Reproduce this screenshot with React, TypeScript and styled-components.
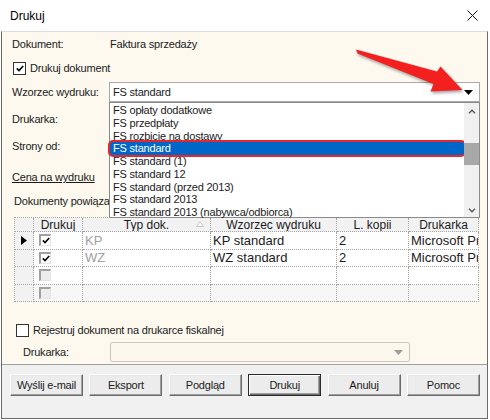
import React from "react";
import styled, { createGlobalStyle } from "styled-components";

const GlobalStyle = createGlobalStyle`
  html, body {
    margin: 0;
    padding: 0;
    background: #ffffff;
  }
  body {
    font-family: "Liberation Sans", Arial, sans-serif;
    color: #1b1b1b;
  }
`;

const Window = styled.div`
  position: relative;
  width: 490px;
  height: 420px;
  display: flex;
  flex-direction: column;
  background: #ffffff;
  overflow: hidden;
`;

const TitleBar = styled.div`
  flex: none;
  height: 31px;
  display: flex;
  align-items: center;
  justify-content: space-between;
  padding: 0 12px 0 10px;
  font-size: 12px;
  color: #000;
`;

const Frame = styled.div`
  flex: 1;
  display: flex;
  flex-direction: column;
  margin: 0 2px 1px 1px;
  border: 1px solid #6b6b6b;
  border-top-color: #dcdcdc;
`;

const Body = styled.div`
  flex: 1;
  display: flex;
  flex-direction: column;
  padding: 4px 7px 0 10px;
  background: #fdf9ef;
  font-size: 11px;
  letter-spacing: -0.2px;
`;

const Row = styled.div<{ $h: number; $mt?: number; $indent?: number }>`
  display: flex;
  align-items: center;
  height: ${(p) => p.$h}px;
  margin-top: ${(p) => p.$mt ?? 0}px;
  padding-left: ${(p) => p.$indent ?? 0}px;
`;

const Label = styled.span<{ $w?: number }>`
  flex: none;
  width: ${(p) => (p.$w ? `${p.$w}px` : "auto")};
  white-space: nowrap;
`;

const LinkLabel = styled.span`
  text-decoration: underline;
`;

const Check = styled.span<{ $checked?: boolean }>`
  flex: none;
  width: 11px;
  height: 11px;
  border: 1px solid #333;
  background: #fff;
  margin-right: 4px;
  display: flex;
  align-items: center;
  justify-content: center;
`;

const SelectWrap = styled.div<{ $w?: number; $disabled?: boolean }>`
  position: relative;
  flex: ${(p) => (p.$w ? "none" : "1")};
  width: ${(p) => (p.$w ? `${p.$w}px` : "auto")};
  height: 100%;
  box-sizing: border-box;
  border: 1px solid ${(p) => (p.$disabled ? "#c9c6bd" : "#a9a9a9")};
  border-radius: ${(p) => (p.$disabled ? "2px" : "0")};
  background: ${(p) => (p.$disabled ? "#fcf8ee" : "#fff")};
  display: flex;
  align-items: center;
  padding: 0 6px 0 3px;
  font-size: 11px;
`;

const SelectText = styled.span`
  flex: 1;
`;

const DropList = styled.div`
  position: absolute;
  top: calc(100% + 1px);
  left: -1px;
  right: -1px;
  height: 116px;
  box-sizing: border-box;
  border: 1px solid #8a8a8a;
  background: #fff;
  padding: 1px 15px 0 0;
  z-index: 5;
`;

const DropItem = styled.div<{ $selected?: boolean }>`
  height: 12.75px;
  line-height: 12.75px;
  padding-left: 3px;
  white-space: nowrap;
  color: ${(p) => (p.$selected ? "#fff" : "#1b1b1b")};
  background: ${(p) => (p.$selected ? "#0067c8" : "transparent")};
  border-radius: ${(p) => (p.$selected ? "3px" : "0")};
  box-shadow: ${(p) => (p.$selected ? "0 0 0 2px #e8272b" : "none")};
  position: relative;
`;

const ScrollBar = styled.div`
  position: absolute;
  top: 0;
  right: 0;
  bottom: 0;
  width: 15px;
  background: #f0f0f0;
  display: flex;
  flex-direction: column;
  align-items: center;
  justify-content: space-between;
  padding: 6px 0 4px;
  box-sizing: border-box;
`;

const Thumb = styled.div`
  position: absolute;
  top: 40px;
  left: 0;
  width: 15px;
  height: 22px;
  background: #a8a8a8;
`;

const Grid = styled.div`
  display: grid;
  grid-template-columns: 19px 49px 128px 126px 72px 70px;
  grid-template-rows: 14px repeat(4, 17.5px);
  width: 464px;
  margin: 9px 0 0 2px;
  border-top: 1px dotted #a6a6a6;
  border-left: 1px dotted #a6a6a6;
  box-sizing: border-box;
  font-size: 13px;
  letter-spacing: 0;
`;

const Cell = styled.div<{ $kind?: "head" | "ind" | "cell"; $muted?: boolean; $alt?: boolean; $center?: boolean }>`
  position: relative;
  display: flex;
  align-items: center;
  justify-content: ${(p) => (p.$center ? "center" : "flex-start")};
  padding-left: ${(p) => (p.$center ? 0 : 2)}px;
  overflow: hidden;
  white-space: nowrap;
  border-right: 1px dotted #a6a6a6;
  border-bottom: 1px dotted #a6a6a6;
  font-size: ${(p) => (p.$kind === "head" ? "12px" : "13px")};
  color: ${(p) => (p.$muted ? "#a0a0a0" : "#1b1b1b")};
  background: ${(p) =>
    p.$kind === "head" || p.$kind === "ind" ? "#f2f2f2" : p.$alt ? "#f7f7f7" : "#fff"};
`;

const GridCheck = styled.span<{ $checked?: boolean }>`
  margin-left: 3px;
  width: 9px;
  height: 9px;
  border-top: 2px solid #a0a0a0;
  border-left: 2px solid #a0a0a0;
  border-right: 1px solid #e4e4e4;
  border-bottom: 1px solid #e4e4e4;
  background: ${(p) => (p.$checked ? "#fff" : "#ededed")};
  display: flex;
  align-items: center;
  justify-content: center;
`;

const SortMark = styled.svg`
  position: absolute;
  right: 6px;
  top: 3px;
`;

const ButtonBar = styled.div`
  flex: none;
  height: 44px;
  border-top: 1px solid #a0a0a0;
  background: #f0f0f0;
  display: flex;
  justify-content: space-between;
  align-items: flex-start;
  padding: 9px 7px 0 8px;
`;

const Button = styled.button<{ $default?: boolean }>`
  width: 73px;
  height: 22px;
  font-family: "Liberation Sans", Arial, sans-serif;
  font-size: 11px;
  letter-spacing: -0.2px;
  color: #1b1b1b;
  background: #ececec;
  border: 1px solid;
  border-color: ${(p) => (p.$default ? "#2b2b2b" : "#fdfdfd #6a6a6a #6a6a6a #fdfdfd")};
  box-shadow: ${(p) =>
    p.$default
      ? "inset 1px 1px #fdfdfd, inset -1px -1px #6a6a6a, inset -2px -2px #a0a0a0"
      : "inset -1px -1px #a0a0a0, inset 1px 1px #e6e6e6"};
  padding: 0;
`;

const Arrow = styled.svg`
  position: absolute;
  left: 0;
  top: 0;
  pointer-events: none;
  filter: drop-shadow(1px 2px 1.5px rgba(0, 0, 0, 0.35));
  z-index: 10;
`;

const CheckMark = () => (
  <svg width="8" height="7" viewBox="0 0 8 7">
    <path d="M0.8 3.4 L3 5.6 L7.2 1" stroke="#000" strokeWidth="1.6" fill="none" />
  </svg>
);

const Caret = ({ color }: { color: string }) => (
  <svg width="9" height="5" viewBox="0 0 9 5">
    <path d="M0 0 H9 L4.5 5 Z" fill={color} />
  </svg>
);

const templates = [
  "FS opłaty dodatkowe",
  "FS przedpłaty",
  "FS rozbicie na dostawy",
  "FS standard",
  "FS standard (1)",
  "FS standard 12",
  "FS standard (przed 2013)",
  "FS standard 2013",
  "FS standard 2013 (nabywca/odbiorca)",
];

const rows = [
  { checked: true, typ: "KP", wzorzec: "KP standard", kopii: "2", drukarka: "Microsoft Print to PDF", current: true },
  { checked: true, typ: "WZ", wzorzec: "WZ standard", kopii: "2", drukarka: "Microsoft Print to PDF" },
  { checked: false, typ: "", wzorzec: "", kopii: "", drukarka: "" },
  { checked: false, typ: "", wzorzec: "", kopii: "", drukarka: "", alt: true },
];

const App: React.FC = () => {
  return (
    <Window>
      <GlobalStyle />
      <TitleBar>
        <span>Drukuj</span>
        <svg width="11" height="11" viewBox="0 0 11 11">
          <path d="M0.5 0.5 L10.5 10.5 M10.5 0.5 L0.5 10.5" stroke="#111" strokeWidth="1" />
        </svg>
      </TitleBar>
      <Frame>
        <Body>
          <Row $h={16}>
            <Label $w={98}>Dokument:</Label>
            <span>Faktura sprzedaży</span>
          </Row>
          <Row $h={14} $mt={9} $indent={1}>
            <Check $checked>
              <CheckMark />
            </Check>
            <span>Drukuj dokument</span>
          </Row>
          <Row $h={20} $mt={7}>
            <Label $w={97}>Wzorzec wydruku:</Label>
            <SelectWrap>
              <SelectText>FS standard</SelectText>
              <Caret color="#000" />
              <DropList>
                {templates.map((t) => (
                  <DropItem key={t} $selected={t === "FS standard"}>
                    {t}
                  </DropItem>
                ))}
                <ScrollBar>
                  <svg width="8" height="5" viewBox="0 0 8 5">
                    <path d="M1 4.2 L4 1.2 L7 4.2" stroke="#555" strokeWidth="1.3" fill="none" />
                  </svg>
                  <svg width="8" height="5" viewBox="0 0 8 5">
                    <path d="M1 0.8 L4 3.8 L7 0.8" stroke="#555" strokeWidth="1.3" fill="none" />
                  </svg>
                  <Thumb />
                </ScrollBar>
              </DropList>
            </SelectWrap>
          </Row>
          <Row $h={20} $mt={7}>
            <Label $w={97}>Drukarka:</Label>
          </Row>
          <Row $h={20} $mt={7}>
            <Label $w={97}>Strony od:</Label>
          </Row>
          <Row $h={14} $mt={14}>
            <LinkLabel>Cena na wydruku</LinkLabel>
          </Row>
          <Row $h={14} $mt={10} $indent={2}>
            <Label>Dokumenty powiązane</Label>
          </Row>
          <Grid>
            <Cell $kind="head" />
            <Cell $kind="head" $center>Drukuj</Cell>
            <Cell $kind="head" $center>
              Typ dok.
              <SortMark width="8" height="6" viewBox="0 0 8 6">
                <path d="M0.5 5.5 L4 0.8 L7.5 5.5 Z" fill="#fff" stroke="#c6c6c6" strokeWidth="1" />
              </SortMark>
            </Cell>
            <Cell $kind="head" $center>Wzorzec wydruku</Cell>
            <Cell $kind="head" $center>L. kopii</Cell>
            <Cell $kind="head" $center>Drukarka</Cell>
            {rows.map((r, i) => (
              <React.Fragment key={i}>
                <Cell $kind="ind" $center>
                  {r.current && (
                    <svg width="6" height="9" viewBox="0 0 6 9">
                      <path d="M0 0 L6 4.5 L0 9 Z" fill="#000" />
                    </svg>
                  )}
                </Cell>
                <Cell $alt={r.alt}>
                  <GridCheck $checked={r.checked}>{r.checked && <CheckMark />}</GridCheck>
                </Cell>
                <Cell $alt={r.alt} $muted>{r.typ}</Cell>
                <Cell $alt={r.alt}>{r.wzorzec}</Cell>
                <Cell $alt={r.alt}>{r.kopii}</Cell>
                <Cell $alt={r.alt}>{r.drukarka}</Cell>
              </React.Fragment>
            ))}
          </Grid>
          <Row $h={14} $mt={21} $indent={4}>
            <Check />
            <span>Rejestruj dokument na drukarce fiskalnej</span>
          </Row>
          <Row $h={20} $mt={5} $indent={11}>
            <Label $w={87}>Drukarka:</Label>
            <SelectWrap $w={300} $disabled>
              <SelectText />
              <Caret color="#9c9c9c" />
            </SelectWrap>
          </Row>
        </Body>
        <ButtonBar>
          <Button>Wyślij e-mail</Button>
          <Button>Eksport</Button>
          <Button>Podgląd</Button>
          <Button $default>Drukuj</Button>
          <Button>Anuluj</Button>
          <Button>Pomoc</Button>
        </ButtonBar>
      </Frame>
      <Arrow width="490" height="420" viewBox="0 0 490 420">
        <path
          d="M356 49.5 L437 71.5 L440.5 66.5 L462.5 90 L430.5 91.5 L433.5 84 L357.5 53.5 Z"
          fill="#f41f1f"
        />
      </Arrow>
    </Window>
  );
};

export default App;
